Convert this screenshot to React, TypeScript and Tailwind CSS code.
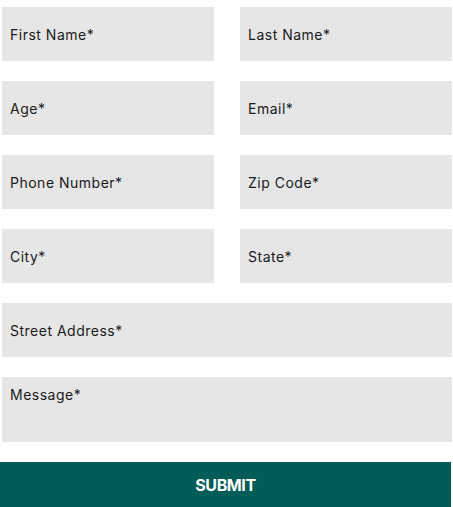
const fields = [
  "First Name*",
  "Last Name*",
  "Age*",
  "Email*",
  "Phone Number*",
  "Zip Code*",
  "City*",
  "State*",
];

const Field = ({ label, full }: { label: string; full?: boolean }) => (
  <div
    className={`h-[54px] bg-[#e6e6e6] flex items-center px-2 text-[14px] tracking-[0.5px] text-[#1a1a1a] ${
      full ? "w-[450px]" : "w-[212px]"
    }`}
  >
    {label}
  </div>
);

export default function App() {
  return (
    <div
      className="w-[453px] h-[507px] bg-white pt-[7px] flex flex-col"
      style={{ fontFamily: "Inter, 'Open Sans', sans-serif" }}
    >
      <div className="pl-[2px] grid grid-cols-[212px_212px] gap-x-[26px] gap-y-[20px]">
        {fields.map((f) => (
          <Field key={f} label={f} />
        ))}
      </div>
      <div className="pl-[2px] mt-[20px]">
        <Field label="Street Address*" full />
      </div>
      <div className="pl-[2px] mt-[20px]">
        <div className="w-[450px] h-[65px] bg-[#e6e6e6] px-2 pt-[7px] text-[14px] tracking-[0.5px] text-[#1a1a1a]">
          Message*
        </div>
      </div>
      <button className="mt-[20px] w-[451px] h-[45px] bg-[#025c57] text-white font-bold text-[16px] tracking-tight">
        SUBMIT
      </button>
    </div>
  );
}
